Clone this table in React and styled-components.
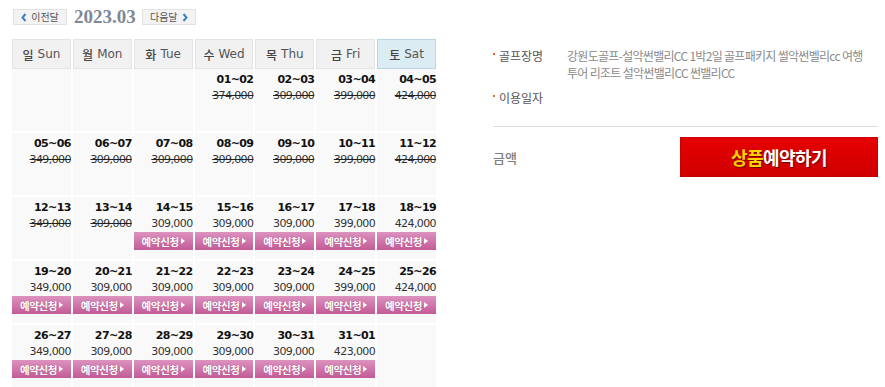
import styled, { createGlobalStyle, css } from "styled-components";

const GlobalStyle = createGlobalStyle`
  body {
    margin: 0;
    background: #fff;
    font-family: "DejaVu Sans", "Noto Sans CJK KR", sans-serif;
  }
`;

const Page = styled.div`
  display: flex;
  align-items: flex-start;
  gap: 57px;
  padding: 9px 0 0 12px;
`;

const Left = styled.div`
  width: 424px;
`;

const MonthNav = styled.div`
  display: flex;
  align-items: center;
  height: 16px;
  padding-left: 1px;
`;

const NavButton = styled.button`
  display: flex;
  align-items: center;
  justify-content: center;
  gap: 4px;
  width: 54px;
  height: 16px;
  padding: 0;
  border: 1px solid #e2e2e2;
  background: #f3f3f3;
  color: #555;
  font-family: "Noto Sans CJK KR", sans-serif;
  font-size: 10px;
  line-height: 14px;
  cursor: pointer;
`;

const MonthTitle = styled.h2`
  margin: 0 6px 0 7px;
  font-family: "Liberation Serif", serif;
  font-size: 19px;
  font-weight: bold;
  line-height: 16px;
  color: #7f8894;
`;

const HeadRow = styled.div`
  display: grid;
  grid-template-columns: repeat(7, 1fr);
  column-gap: 2px;
  margin-top: 14px;
  height: 30px;
`;

const HeadCell = styled.div`
  display: flex;
  align-items: center;
  justify-content: center;
  gap: 4px;
  border: 1px solid ${(p) => (p.$sat ? "#b8d6e3" : "#e4e4e4")};
  background: ${(p) => (p.$sat ? "#dbecf3" : "#f1f1f1")};
  color: #555;
  font-size: 12px;
  b {
    font-family: "Noto Sans CJK KR", sans-serif;
    font-weight: 500;
    color: #444;
  }
`;

const Body = styled.div`
  display: grid;
  grid-template-columns: repeat(7, 1fr);
  grid-auto-rows: 62px;
  gap: 2px;
`;

const DayCell = styled.div`
  display: flex;
  flex-direction: column;
  align-items: stretch;
  padding-top: 3px;
  background: #f9f9f9;
  text-align: right;
`;

const DateText = styled.div`
  font-size: 11px;
  font-weight: bold;
  line-height: 16px;
  letter-spacing: -0.6px;
  color: #111;
`;

const Price = styled.div`
  font-size: 11px;
  line-height: 16px;
  letter-spacing: -0.6px;
  color: #333;
  ${(p) =>
    p.$closed &&
    css`
      text-decoration: line-through;
      text-decoration-color: #222;
    `}
`;

const ReserveButton = styled.button`
  display: flex;
  align-items: center;
  justify-content: center;
  gap: 2px;
  height: 18px;
  margin: 0;
  padding: 0;
  border: none;
  background: linear-gradient(#dc92bf, #c35b97);
  color: #fff;
  font-family: "Noto Sans CJK KR", sans-serif;
  font-size: 10.5px;
  font-weight: bold;
  letter-spacing: -0.4px;
  text-shadow: 0 0 1px rgba(120, 30, 80, 0.5);
  cursor: pointer;
`;

const Arrow = styled.span`
  width: 0;
  height: 0;
  border-top: 3.5px solid transparent;
  border-bottom: 3.5px solid transparent;
  border-left: 4px solid #fff;
`;

const Right = styled.div`
  width: 385px;
  margin-top: 38px;
`;

const InfoRow = styled.div`
  display: grid;
  grid-template-columns: 74px 1fr;
  margin-bottom: 8px;
  font-family: "Noto Sans CJK KR", sans-serif;
  font-size: 12px;
  line-height: 17px;
`;

const Label = styled.div`
  position: relative;
  padding-left: 6px;
  color: #555;
  &::before {
    content: "";
    position: absolute;
    left: 0;
    top: 6px;
    width: 2px;
    height: 2px;
    background: #f26a1b;
  }
`;

const Value = styled.div`
  min-height: 17px;
  color: #8a8a8a;
  letter-spacing: -0.7px;
  white-space: nowrap;
`;

const Divider = styled.hr`
  margin: 20px 0 0;
  border: none;
  border-top: 1px solid #dcdcdc;
`;

const AmountRow = styled.div`
  display: flex;
  align-items: center;
  justify-content: space-between;
  margin-top: 10px;
`;

const AmountLabel = styled.span`
  font-family: "Noto Sans CJK KR", sans-serif;
  font-size: 13px;
  font-weight: 500;
  color: #808080;
`;

const BookButton = styled.button`
  width: 198px;
  height: 40px;
  border: 1px solid #c80000;
  background: linear-gradient(#e60000, #cf0000);
  color: #fff;
  font-family: "Noto Sans CJK KR", sans-serif;
  font-size: 18px;
  font-weight: bold;
  letter-spacing: -0.6px;
  text-shadow: 1px 1px 1px rgba(60, 0, 0, 0.7);
  cursor: pointer;
  em {
    font-style: normal;
    color: #ffd200;
  }
`;

const Chevron = ({ dir }) => (
  <svg width="6" height="9" viewBox="0 0 6 9">
    <path
      d={dir === "left" ? "M4.5 1 L1.5 4.5 L4.5 8" : "M1.5 1 L4.5 4.5 L1.5 8"}
      fill="none"
      stroke="#3d80c8"
      strokeWidth="2"
    />
  </svg>
);

const days = [
  ["일", "Sun"],
  ["월", "Mon"],
  ["화", "Tue"],
  ["수", "Wed"],
  ["목", "Thu"],
  ["금", "Fri"],
  ["토", "Sat"],
];

// [date, price, open]
const weeks = [
  [null, null, null, ["01~02", "374,000"], ["02~03", "309,000"], ["03~04", "399,000"], ["04~05", "424,000"]],
  [["05~06", "349,000"], ["06~07", "309,000"], ["07~08", "309,000"], ["08~09", "309,000"], ["09~10", "309,000"], ["10~11", "399,000"], ["11~12", "424,000"]],
  [["12~13", "349,000"], ["13~14", "309,000"], ["14~15", "309,000", true], ["15~16", "309,000", true], ["16~17", "309,000", true], ["17~18", "399,000", true], ["18~19", "424,000", true]],
  [["19~20", "349,000", true], ["20~21", "309,000", true], ["21~22", "309,000", true], ["22~23", "309,000", true], ["23~24", "309,000", true], ["24~25", "399,000", true], ["25~26", "424,000", true]],
  [["26~27", "349,000", true], ["27~28", "309,000", true], ["28~29", "309,000", true], ["29~30", "309,000", true], ["30~31", "309,000", true], ["31~01", "423,000", true], null],
];

const App = () => {
  return (
    <Page>
      <GlobalStyle />
      <Left>
        <MonthNav>
          <NavButton>
            <Chevron dir="left" />
            이전달
          </NavButton>
          <MonthTitle>2023.03</MonthTitle>
          <NavButton>
            다음달
            <Chevron dir="right" />
          </NavButton>
        </MonthNav>
        <HeadRow>
          {days.map(([ko, en], i) => (
            <HeadCell key={en} $sat={i === 6}>
              <b>{ko}</b>
              {en}
            </HeadCell>
          ))}
        </HeadRow>
        <Body>
          {weeks.flat().map((d, i) =>
            d ? (
              <DayCell key={i}>
                <DateText>{d[0]}</DateText>
                <Price $closed={!d[2]}>{d[1]}</Price>
                {d[2] && (
                  <ReserveButton>
                    예약신청
                    <Arrow />
                  </ReserveButton>
                )}
              </DayCell>
            ) : (
              <DayCell key={i} />
            )
          )}
        </Body>
      </Left>
      <Right>
        <InfoRow>
          <Label>골프장명</Label>
          <Value>
            강원도골프-설악썬밸리CC 1박2일 골프패키지 썰악썬벨리cc 여행
            <br />
            투어 리조트 설악썬밸리CC 썬밸리CC
          </Value>
        </InfoRow>
        <InfoRow>
          <Label>이용일자</Label>
          <Value />
        </InfoRow>
        <Divider />
        <AmountRow>
          <AmountLabel>금액</AmountLabel>
          <BookButton>
            <em>상품</em>예약하기
          </BookButton>
        </AmountRow>
      </Right>
    </Page>
  );
};

export default App;
